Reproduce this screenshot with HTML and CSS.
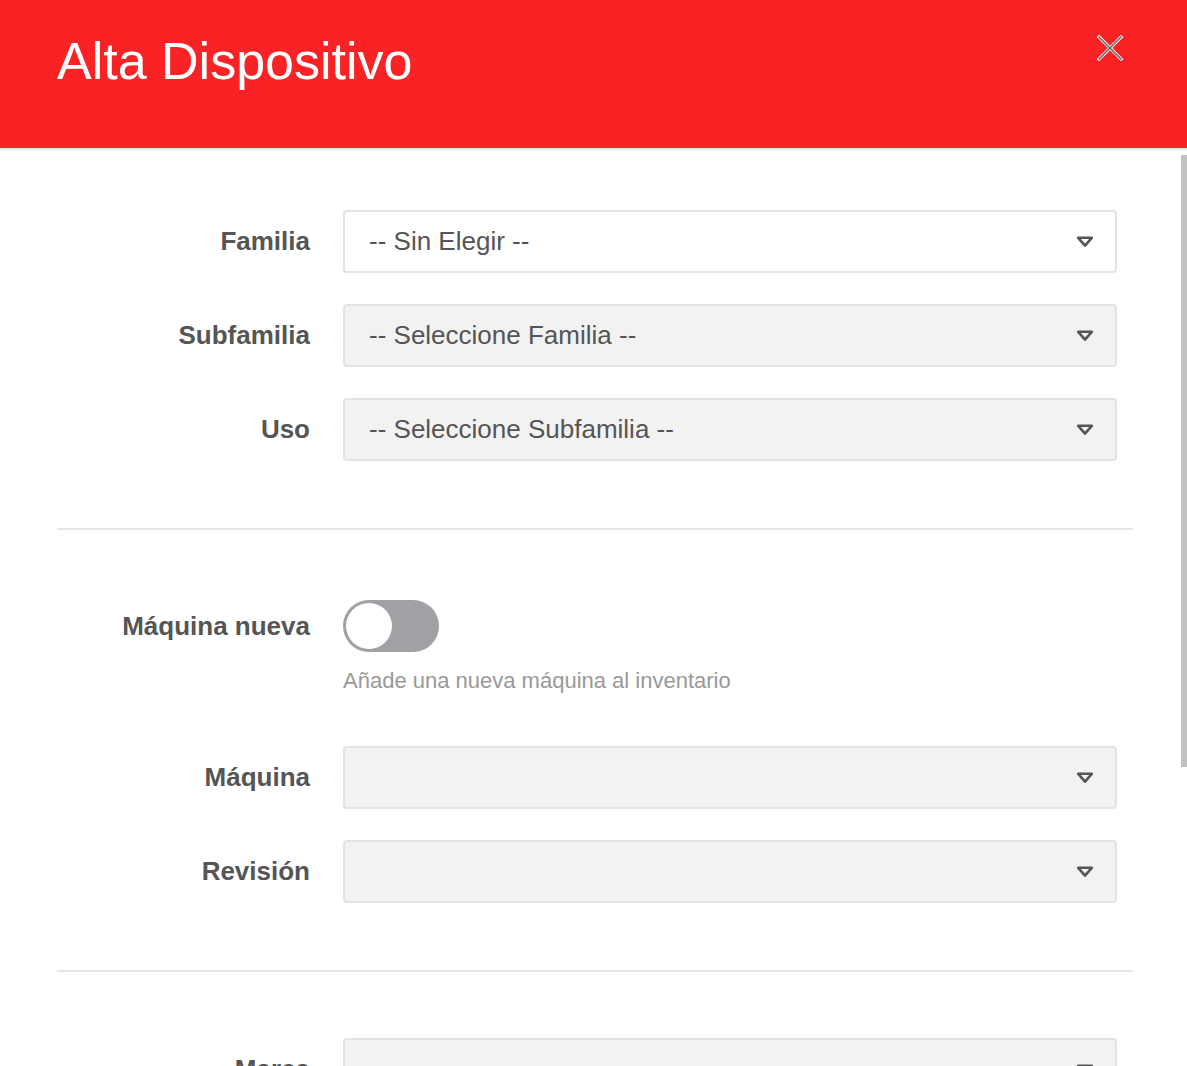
FILE: index.html
```html
<!DOCTYPE html>
<html lang="es">
<head>
<meta charset="utf-8">
<title>Alta Dispositivo</title>
<link rel="stylesheet" href="styles.css">
</head>
<body>
<div class="modal">
  <header class="modal-header">
    <h1 class="modal-title">Alta Dispositivo</h1>
    <button class="close" type="button" aria-label="Cerrar">
      <svg width="26" height="26" viewBox="0 0 26 26">
        <g stroke="#ffffff" stroke-width="3.2" stroke-linecap="square">
          <line x1="2" y1="2" x2="24" y2="24"/>
          <line x1="24" y1="2" x2="2" y2="24"/>
        </g>
        <g stroke="#6b6f70" stroke-width="1.6" stroke-linecap="square">
          <line x1="2" y1="2" x2="24" y2="24"/>
          <line x1="24" y1="2" x2="2" y2="24"/>
        </g>
      </svg>
    </button>
  </header>
  <div class="modal-main">
    <div class="modal-body">
      <section class="group">
        <div class="row">
          <label class="label">Familia</label>
          <div class="select select-white"><span>-- Sin Elegir --</span><svg class="caret" width="18" height="12" viewBox="0 0 18 12"><polygon points="2.2,1.8 15.8,1.8 9,9.6" fill="none" stroke="#555" stroke-width="2.6" stroke-linejoin="round"/></svg></div>
        </div>
        <div class="row">
          <label class="label">Subfamilia</label>
          <div class="select"><span>-- Seleccione Familia --</span><svg class="caret" width="18" height="12" viewBox="0 0 18 12"><polygon points="2.2,1.8 15.8,1.8 9,9.6" fill="none" stroke="#555" stroke-width="2.6" stroke-linejoin="round"/></svg></div>
        </div>
        <div class="row">
          <label class="label">Uso</label>
          <div class="select"><span>-- Seleccione Subfamilia --</span><svg class="caret" width="18" height="12" viewBox="0 0 18 12"><polygon points="2.2,1.8 15.8,1.8 9,9.6" fill="none" stroke="#555" stroke-width="2.6" stroke-linejoin="round"/></svg></div>
        </div>
      </section>
      <hr class="divider divider-first">
      <section class="group">
        <div class="row row-toggle">
          <label class="label">Máquina nueva</label>
          <div class="toggle"><span class="knob"></span></div>
        </div>
        <div class="row row-help">
          <span></span>
          <p class="help">Añade una nueva máquina al inventario</p>
        </div>
        <div class="row row-after-help">
          <label class="label">Máquina</label>
          <div class="select"><span></span><svg class="caret" width="18" height="12" viewBox="0 0 18 12"><polygon points="2.2,1.8 15.8,1.8 9,9.6" fill="none" stroke="#555" stroke-width="2.6" stroke-linejoin="round"/></svg></div>
        </div>
        <div class="row">
          <label class="label">Revisión</label>
          <div class="select"><span></span><svg class="caret" width="18" height="12" viewBox="0 0 18 12"><polygon points="2.2,1.8 15.8,1.8 9,9.6" fill="none" stroke="#555" stroke-width="2.6" stroke-linejoin="round"/></svg></div>
        </div>
      </section>
      <hr class="divider divider-second">
      <section class="group">
        <div class="row">
          <label class="label">Marca</label>
          <div class="select"><span></span><svg class="caret" width="18" height="12" viewBox="0 0 18 12"><polygon points="2.2,1.8 15.8,1.8 9,9.6" fill="none" stroke="#555" stroke-width="2.6" stroke-linejoin="round"/></svg></div>
        </div>
        <div class="row">
          <label class="label">Modelo</label>
          <div class="select"><span></span><svg class="caret" width="18" height="12" viewBox="0 0 18 12"><polygon points="2.2,1.8 15.8,1.8 9,9.6" fill="none" stroke="#555" stroke-width="2.6" stroke-linejoin="round"/></svg></div>
        </div>
      </section>
    </div>
    <div class="scrollbar"><div class="thumb"></div></div>
  </div>
</div>
</body>
</html>
```

FILE: styles.css
```css
* { box-sizing: border-box; }

html, body {
  margin: 0;
  padding: 0;
  height: 100%;
  background: #ffffff;
  font-family: "Liberation Sans", Arial, Helvetica, sans-serif;
}

.modal {
  height: 100vh;
  display: flex;
  flex-direction: column;
  overflow: hidden;
}

.modal-header {
  flex: none;
  height: 150px;
  background: #f92325;
  border-bottom: 2px solid #e4e4e4;
  padding: 31px 0 0 57px;
  display: flex;
  align-items: flex-start;
  justify-content: space-between;
}

.modal-title {
  margin: 0;
  font-size: 52px;
  font-weight: 400;
  line-height: normal;
  color: #ffffff;
}

.close {
  border: 0;
  background: transparent;
  padding: 0;
  margin: 4px 64px 0 0;
  width: 26px;
  height: 26px;
  display: block;
}
.close svg { display: block; }

.modal-main {
  flex: 1;
  min-height: 0;
  display: flex;
}

.modal-body {
  flex: 1;
  min-width: 0;
  overflow: hidden;
  padding: 60px 48px 0 57px;
}

.scrollbar {
  flex: none;
  width: 6px;
  padding-top: 5px;
}
.thumb {
  height: 612px;
  background: #c1c1c1;
}

.group {
  display: flex;
  flex-direction: column;
  gap: 31px;
}

.row {
  display: grid;
  grid-template-columns: 253px 774px;
  column-gap: 33px;
  align-items: center;
}

.label {
  text-align: right;
  font-size: 26px;
  font-weight: 700;
  color: #555555;
}

.select {
  height: 63px;
  border: 2px solid #e3e3e6;
  border-radius: 4px;
  background: #f3f2f3;
  display: flex;
  align-items: center;
  justify-content: space-between;
  padding: 0 21px 0 24px;
  font-size: 26px;
  color: #555555;
}
.select-white { background: #ffffff; }

.caret { display: block; flex: none; margin-top: 1px; }

.divider {
  border: 0;
  height: 2px;
  background: #e4e4ea;
  margin: 0;
}
.divider-first { margin: 67px 0 70px; }
.divider-second { margin: 67px 0 66px; }

.toggle {
  width: 96px;
  height: 52px;
  border-radius: 26px;
  background: #a0a0a5;
  padding: 3px;
  display: flex;
}
.knob {
  width: 46px;
  height: 46px;
  border-radius: 50%;
  background: #ffffff;
}

.group .row-help { margin-top: -15px; }
.help {
  grid-column: 2;
  margin: 0;
  font-size: 22px;
  line-height: 25px;
  color: #999999;
}
.group .row-after-help { margin-top: 22px; }
```
